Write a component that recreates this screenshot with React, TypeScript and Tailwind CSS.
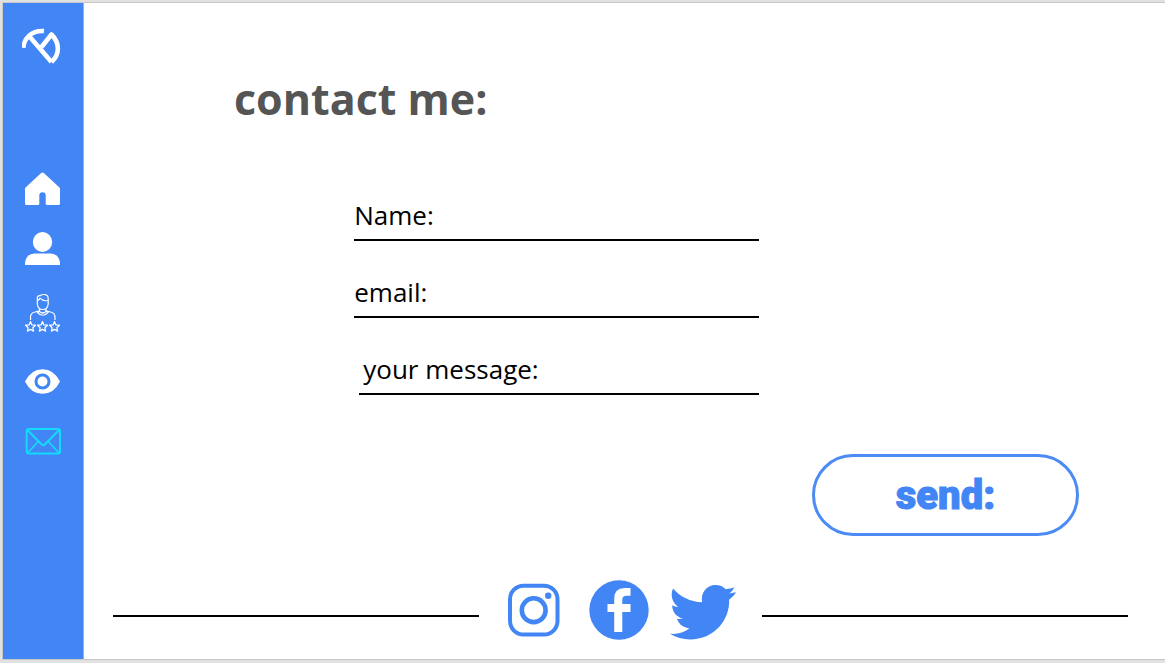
import React from "react";

const links = [
  { label: "Home", href: "#home", Icon: HomeIcon },
  { label: "About me", href: "#about", Icon: UserIcon },
  { label: "Reviews", href: "#reviews", Icon: ReviewsIcon },
  { label: "Portfolio", href: "#portfolio", Icon: EyeIcon },
  { label: "Contact", href: "#contact", Icon: MailIcon },
];

function Logo() {
  return (
    <svg viewBox="2 0 42 40" className="h-10 w-[42px]" fill="none" stroke="white" strokeWidth="4.600" strokeLinejoin="round" aria-hidden="true">
      <path d="M3.300 21.800C4 12.500 11 4.200 24 5" />
      <path d="M9.500 10.500L31.500 36" />
      <path d="M21.500 21L31.500 8.500C40 17 40 28 31.500 36" />
    </svg>
  );
}

function HomeIcon() {
  return (
    <svg viewBox="0 0 35 34" className="h-[34px] w-[35px]" fill="white" aria-hidden="true">
      <path d="M16.200 1Q17.500-.2 18.800 1L34.200 15.200Q35 16 35 17V31.500Q35 33 33.500 33H22Q20.700 33 20.700 31.700V23.200Q20.700 20.200 17.500 20.200Q14.300 20.200 14.300 23.200V31.700Q14.300 33 13 33H1.500Q0 33 0 31.500V17Q0 16 .8 15.200Z" />
    </svg>
  );
}

function UserIcon() {
  return (
    <svg viewBox="0 0 35 34" className="h-[34px] w-[35px]" fill="white" aria-hidden="true">
      <ellipse cx="17.500" cy="10" rx="9.700" ry="10" />
      <path d="M0 33V31Q1 22 9.500 21.500H25.500Q34 22 35 31V33Z" />
    </svg>
  );
}

function ReviewsIcon() {
  const star = "M0-4.900L1.400-1.600L5-1.300L2.300 1.200L3.100 4.600L0 2.900L-3.100 4.600L-2.300 1.200L-5-1.300L-1.400-1.600Z";
  return (
    <svg viewBox="0 0 35 42" className="h-[42px] w-[35px]" fill="none" stroke="white" strokeWidth="1.200" strokeLinejoin="round" aria-hidden="true">
      <path d="M12.300 12V6Q12.300 3.500 15 3.700Q17 2.200 20 2.600Q23.300 3 23.200 7V12Q22.500 17.500 17.700 17.500Q13 17.500 12.300 12Z" />
      <path d="M12.500 8.500Q14.500 7.500 15 6.200Q18 9.500 23 8.500" />
      <path d="M14.500 16.500V19.500Q17.700 22.500 21 19.500V16.500" />
      <path d="M5.500 28V25Q5.500 21 10 20L14.500 18.800L12.500 20.500Q17.700 26 23 20.500L21 18.800L25.500 20Q30 21 30 25V28" />
      <path d={star} transform="translate(5.500 34.500)" />
      <path d={star} transform="translate(17.500 34.500)" />
      <path d={star} transform="translate(29.500 34.500)" />
    </svg>
  );
}

function EyeIcon() {
  return (
    <svg viewBox="0 0 35 42" className="h-[42px] w-[35px]" aria-hidden="true">
      <path d="M0 21.500Q6 9.200 17.500 9.200T35 21.500Q29 33.800 17.500 33.800T0 21.500Z" fill="white" />
      <circle cx="17.500" cy="21.500" r="6.500" fill="white" stroke="#4285f4" strokeWidth="3" />
    </svg>
  );
}

function MailIcon() {
  return (
    <svg viewBox="0 1 36 28" className="h-7 w-9" fill="none" stroke="#12dcfa" strokeWidth="2" strokeLinejoin="round" aria-hidden="true">
      <rect x="1.700" y="2" width="33.300" height="24.500" rx="2" />
      <path d="M2.500 3L16.800 17.500Q18.300 19 19.800 17.500L34.200 3" />
      <path d="M2.500 26L13.300 14.500M34.200 26L23.300 14.500" strokeWidth="1.700" />
    </svg>
  );
}

function InstagramIcon() {
  return (
    <svg viewBox="0 0 52 54" className="h-[54px] w-[52px]" fill="none" stroke="#4285f4" aria-hidden="true">
      <rect x="2" y="2.700" width="47.500" height="48.900" rx="13.500" strokeWidth="4" />
      <circle cx="25.700" cy="27.200" r="11.900" strokeWidth="4.600" />
      <circle cx="40.200" cy="12.800" r="3.200" fill="#4285f4" stroke="none" />
    </svg>
  );
}

function FacebookIcon() {
  return (
    <svg viewBox="0 0 60 60" className="size-[60px]" aria-hidden="true">
      <circle cx="30" cy="30" r="29.700" fill="#4285f4" />
      <path d="M25.200 52V32H18.500V24H25.200V18.500Q25.200 8 35.500 8H41.500V15.700H37.500Q33.300 15.700 33.300 19.500V24H41.500V32H33.300V52Z" fill="white" />
    </svg>
  );
}

function TwitterIcon() {
  return (
    <svg viewBox="0 -4 68 60" className="h-[60px] w-[68px]" fill="#4285f4" aria-hidden="true">
      <path d="M3 4.500C10.500 13 20 17.700 32.200 18.300C30.300 9 36.500 1 45.500 1C50 1 53 2.500 55.800 5.300C59 4.600 61.800 4.500 64.200 3C63.300 6 61.500 8 59 9.500L66 8.300C64.200 11.500 62 13.500 59.200 15.500C60 36 44 55.500 20 55.500C13 55.500 6 53.500 0 49.800C7.500 50.500 14 48.500 19.500 44.300C13.500 43.800 9 40.500 7 34.800C9 35.200 11 35.100 13 34.600C6.500 33 2.200 28 2.200 21.200C4 22.200 6 22.800 8.200 22.900C2 18.500 .2 11 3 4.500Z" />
    </svg>
  );
}

const fields = [
  { id: "name", label: "Name:", type: "text", row: "" },
  { id: "email", label: "email:", type: "email", row: "" },
  { id: "message", label: "your message:", type: "text", row: "ml-[5px] pl-1" },
];

const socials = [
  { label: "Instagram", href: "#instagram", Icon: InstagramIcon },
  { label: "Facebook", href: "#facebook", Icon: FacebookIcon },
  { label: "Twitter", href: "#twitter", Icon: TwitterIcon },
];

export default function App() {
  return (
    <div className="flex min-h-screen bg-[#e1e1e1] pt-0.5 pb-[3px] pl-0.5 font-['Open_Sans','Noto_Sans',sans-serif]">
      <div className="flex grow border-y border-l border-[#c8c8c8] bg-white">
        <aside className="flex w-[81px] shrink-0 flex-col items-center border-r border-[#8ab4f8] bg-[#4285f4] pt-[23px] pr-px">
          <a href="#top" aria-label="Main page">
            <Logo />
          </a>
          <nav aria-label="Sections" className="mt-[106px] flex flex-col items-center gap-[26px]">
            {links.map(({ label, href, Icon }) => (
              <a key={label} href={href} aria-label={label}>
                <Icon />
              </a>
            ))}
          </nav>
        </aside>

        <main className="flex grow flex-col pt-[66px]">
          <h1 className="ml-[150px] text-[43px] leading-[60px] font-bold text-[#555555]">contact me:</h1>

          <form onSubmit={(e) => e.preventDefault()} className="mt-[35px] flex flex-col">
            <div className="ml-[25%] w-[405px]">
              {fields.map(({ id, label, type, row }) => (
                <div key={id} className={`flex h-[77px] items-end border-b-2 border-black pb-1.5 ${row}`}>
                  <label htmlFor={id} className="text-[26px] leading-9 font-[370] whitespace-nowrap text-black">
                    {label}
                  </label>
                  <input id={id} type={type} className="h-9 min-w-0 grow bg-transparent pl-2 text-xl outline-none" />
                </div>
              ))}
            </div>
            <button
              type="submit"
              className="mt-[59px] mr-[86px] h-[82px] w-[267px] self-end rounded-full border-3 border-[#4c8bf5] pt-0.5 font-['Impact','Roboto',sans-serif] text-[40px] leading-none font-black text-[#4285f4] [-webkit-text-stroke:1px_#4285f4]"
            >
              send:
            </button>
          </form>

          <footer className="mt-auto flex items-center pr-[37px] pb-[19px] pl-[29px]">
            <div className="mt-3 h-0.5 grow bg-black" />
            <nav aria-label="Social media" className="flex items-center pr-4 pl-3">
              {socials.map(({ label, href, Icon }) => (
                <a key={label} href={href} aria-label={label} className="flex w-[85px] justify-center">
                  <Icon />
                </a>
              ))}
            </nav>
            <div className="mt-3 h-0.5 grow bg-black" />
          </footer>
        </main>
      </div>
    </div>
  );
}
